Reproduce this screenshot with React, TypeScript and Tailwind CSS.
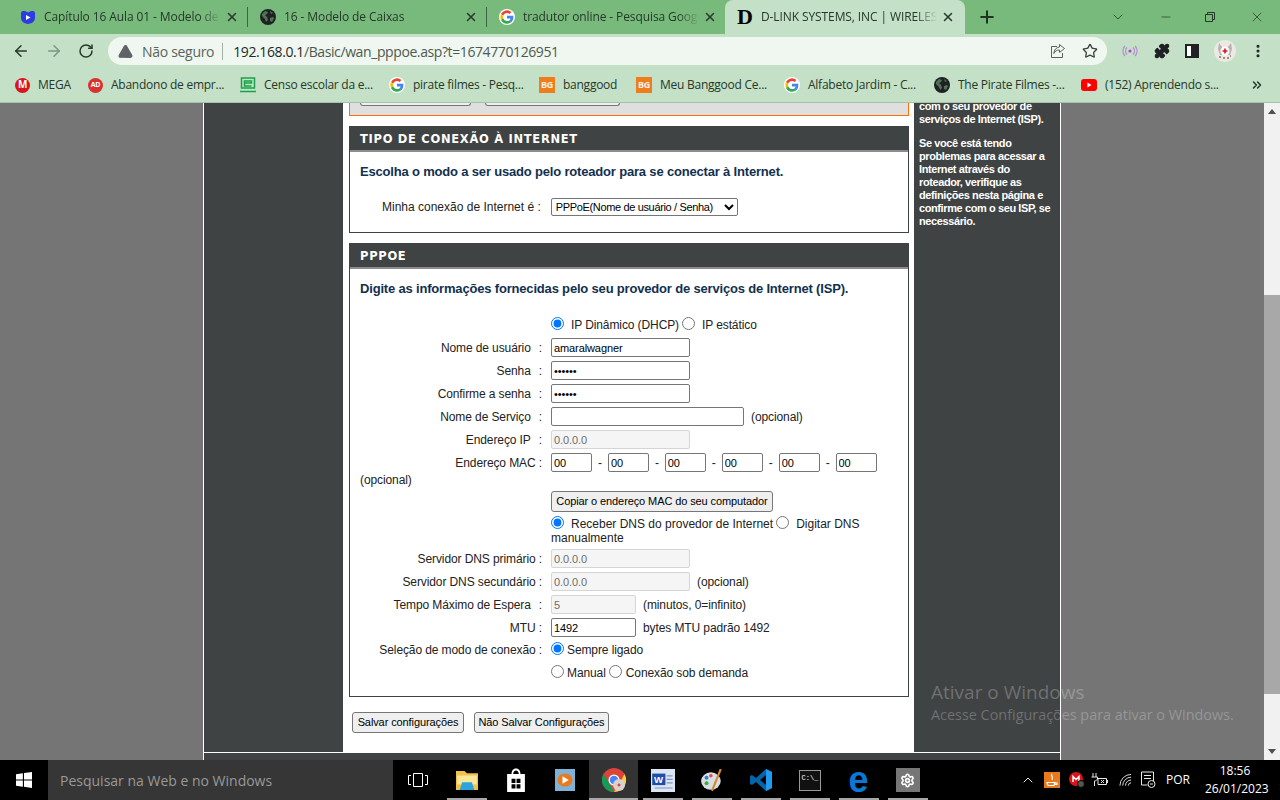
import React from 'react';
import { ArrowLeft, ArrowRight, RotateCw, TriangleAlert, Star, Puzzle, X, Plus, ChevronDown, Minus, ChevronUp, ChevronsRight, EllipsisVertical, Settings } from 'lucide-react';

function GoogleIcon() {
  return (
    <svg width="16" height="16" viewBox="0 0 48 48" className="shrink-0">
      <circle cx="24" cy="24" r="24" fill="#fff" />
      <path fill="#ea4335" d="M24 12c3 0 5.600 1 7.700 3l5.700-5.700A20 20 0 0 0 6 15l6.600 5.100C14.200 15.400 18.700 12 24 12z" />
      <path fill="#4285f4" d="M43 24.500c0-1.500-.1-2.900-.4-4.300H24v8h10.700c-.5 2.600-1.900 4.700-4 6.200l6.400 5c3.700-3.500 5.900-8.600 5.900-14.900z" />
      <path fill="#fbbc05" d="M12.600 27.900a12 12 0 0 1 0-7.800L6 15a20 20 0 0 0 0 18z" />
      <path fill="#34a853" d="M24 44c5.400 0 9.900-1.800 13.100-4.800l-6.400-5c-1.800 1.200-4 1.900-6.700 1.900-5.300 0-9.800-3.500-11.400-8.300L6 33a20 20 0 0 0 18 11z" />
    </svg>
  );
}

function GlobeIcon() {
  return (
    <svg width="16" height="16" viewBox="0 0 16 16" className="shrink-0">
      <circle cx="8" cy="8" r="8" fill="#202124" />
      <path fill="#78b97c" d="M2 5l3-3 3 1-1 2-2 1 2 2 1 3-2 2-1-3-3-3zM10 9l3-1 1 1-2 4-2-1zM10 2l3 2-2 1z" opacity="0.55" />
    </svg>
  );
}

function BgIcon() {
  return (
    <span className="flex h-4 w-4 shrink-0 items-center justify-center bg-[#ee7d1c] text-[9px] font-bold text-white/90">BG</span>
  );
}

function Tab({ icon, title, width, active }: { icon: React.ReactNode; title: string; width: string; active?: boolean }) {
  return (
    <div className={`flex h-[34px] items-center pl-3 ${width} ${active ? 'rounded-t-lg bg-[#c4e0c6] pr-[10px]' : 'pr-2'}`}>
      {icon}
      <span className="ml-2 min-w-0 flex-1 overflow-hidden whitespace-nowrap text-xs tracking-[-0.1px] text-[#26382a] [mask-image:linear-gradient(90deg,#000_88%,transparent)]">{title}</span>
      <X size={14} strokeWidth={2.6} className="ml-1 shrink-0 text-[#2b3a2f]" />
    </div>
  );
}

function Bookmark({ icon, label, width }: { icon: React.ReactNode; label: string; width: string }) {
  return (
    <div className={`flex shrink-0 items-center gap-2 whitespace-nowrap text-xs tracking-[-0.25px] text-[#26382a] ${width}`}>
      {icon}
      <span>{label}</span>
    </div>
  );
}

function ChromeBar() {
  return (
    <div className="shrink-0 font-['Open_Sans',sans-serif]">
      <div className="flex h-[34px] items-center bg-[#78b97c] pl-[8px]">
        <Tab
          width="w-[239px]"
          title="Capítulo 16 Aula 01 - Modelo de"
          icon={
            <svg width="16" height="16" viewBox="0 0 16 16" className="shrink-0">
              <path fill="#2b3de0" d="M1 4q0-2 2-2h2l3 1.500L11 2h2q2 0 2 2v5q0 5-7 6-7-1-7-6z" />
              <path fill="#fff" d="M6 6l4.500 2.500L6 11z" />
            </svg>
          }
        />
        <div className="h-5 w-px bg-[#3f6144]" />
        <Tab width="w-[238px]" title="16 - Modelo de Caixas" icon={<GlobeIcon />} />
        <div className="h-5 w-px bg-[#3f6144]" />
        <Tab width="w-[238px]" title="tradutor online - Pesquisa Google" icon={<GoogleIcon />} />
        <Tab
          active
          width="w-[240px]"
          title="D-LINK SYSTEMS, INC | WIRELESS"
          icon={<span className="w-4 shrink-0 font-['Liberation_Serif',serif] text-[22px] font-bold leading-none text-black">D</span>}
        />
        <Plus size={20} strokeWidth={2.4} className="ml-[12px] text-[#1f3324]" />
        <div className="ml-auto flex items-center text-[#26382a]">
          <ChevronDown size={16} strokeWidth={1.2} className="mr-[33px]" />
          <Minus size={14} strokeWidth={1.2} className="mr-[31px]" />
          <svg width="12" height="12" viewBox="0 0 12 12" fill="none" stroke="currentColor" className="mr-[33px]">
            <path d="M1.500 3.500h7v7h-7zM3.500 3.500v-2h7v7h-2" />
          </svg>
          <X size={16} strokeWidth={1.1} className="mr-[15px]" />
        </div>
      </div>

      <div className="flex h-[34px] items-center bg-[#c4e0c6] pl-[12px]">
        <ArrowLeft size={18} strokeWidth={2} className="text-[#26382a]" />
        <ArrowRight size={18} strokeWidth={2} className="ml-[15px] text-[#7f9482]" />
        <RotateCw size={16} strokeWidth={2.2} className="ml-[15px] text-[#26382a]" />
        <div className="ml-[14px] flex h-7 w-[999px] items-center rounded-full bg-[#f0f7f0] pl-[10px] pr-[8px] text-[14px]">
          <TriangleAlert size={15} strokeWidth={2.4} fill="#5f6368" className="text-[#5f6368]" />
          <span className="ml-[9px] tracking-[-0.3px] text-[#5a655c]">Não seguro</span>
          <span className="ml-[8px] mr-[10px] h-[17px] w-px bg-[#a5b0a7]" />
          <span className="tracking-[-0.4px] text-[#1c2a1f]">192.168.0.1</span>
          <span className="tracking-[-0.4px] text-[#4e5a50]">/Basic/wan_pppoe.asp?t=1674770126951</span>
          <svg width="16" height="16" viewBox="0 0 16 16" fill="none" stroke="#56625a" className="ml-auto mr-[16px]">
            <path d="M7 3.500H1.500v11h11V10" />
            <path d="M9.500 1.500l5 4-5 4V7C7 7 5 8 3.800 10.500 4 7 6 4.500 9.500 4z" />
          </svg>
          <Star size={16} strokeWidth={2} className="mr-[1px] text-[#3a463d]" />
        </div>
        <svg width="16" height="14" viewBox="0 0 16 14" fill="none" stroke="#b98ad6" strokeWidth="1.300" className="ml-[15px]">
          <circle cx="8" cy="7" r="1.600" fill="#a24bc9" stroke="none" />
          <path d="M5 3.500a5 5 0 0 0 0 7M11 3.500a5 5 0 0 1 0 7M2.800 2a8 8 0 0 0 0 10M13.200 2a8 8 0 0 1 0 10" />
        </svg>
        <Puzzle size={16} fill="#202124" className="ml-[16px] text-[#202124]" />
        <div className="ml-[15px] flex h-[14px] w-[14px] justify-end border-2 border-[#202124] bg-white">
          <div className="h-full w-[6px] bg-[#202124]" />
        </div>
        <svg width="22" height="22" viewBox="0 0 22 22" className="ml-[15px]">
          <circle cx="11" cy="11" r="11" fill="#ece8e4" />
          <path d="M5 3l3 4h6l3-4 1 6-2 6H6L4 9z" fill="#b9b2ad" />
          <circle cx="11" cy="11" r="4.500" fill="#fff" />
          <path d="M11 8.500v5M8.500 11h5" stroke="#d9161c" strokeWidth="1.600" />
          <path d="M5 17h2M9 18h2M13 18h2M16 16h1" stroke="#8a6f63" strokeWidth="1.300" />
        </svg>
        <EllipsisVertical size={16} strokeWidth={2.6} className="ml-[14px] text-[#202124]" />
      </div>

      <div className="flex h-[35px] items-center border-b border-[#a9c0ab] bg-[#c4e0c6] pl-[15px]">
        <Bookmark
          width="w-[73px]"
          label="MEGA"
          icon={<span className="flex h-[15px] w-[15px] items-center justify-center rounded-full bg-[#d9161c] text-[10px] font-bold text-white">M</span>}
        />
        <Bookmark
          width="w-[152px]"
          label="Abandono de empr..."
          icon={<span className="flex h-[15px] w-[15px] items-center justify-center rounded-full bg-[#d8322f] text-[7px] font-bold text-white">AD</span>}
        />
        <Bookmark
          width="w-[149px]"
          label="Censo escolar da e..."
          icon={
            <svg width="16" height="16" viewBox="0 0 16 16" fill="none" stroke="#16a34a" strokeWidth="1.500">
              <path d="M1.500 1h13v10h-13zM4.500 6h7V4h-7v5h7M0 14.500h16" />
            </svg>
          }
        />
        <Bookmark width="w-[150px]" label="pirate filmes - Pesq..." icon={<GoogleIcon />} />
        <Bookmark width="w-[97px]" label="banggood" icon={<BgIcon />} />
        <Bookmark width="w-[148px]" label="Meu Banggood Ce..." icon={<BgIcon />} />
        <Bookmark width="w-[150px]" label="Alfabeto Jardim - C..." icon={<GoogleIcon />} />
        <Bookmark width="w-[147px]" label="The Pirate Filmes -..." icon={<GlobeIcon />} />
        <Bookmark
          width="w-[169px]"
          label="(152) Aprendendo s..."
          icon={
            <svg width="16" height="12" viewBox="0 0 16 12">
              <rect width="16" height="12" rx="3" fill="#ff0000" />
              <path d="M6.400 3.400l4.200 2.600-4.200 2.600z" fill="#fff" />
            </svg>
          }
        />
        <ChevronsRight size={14} strokeWidth={2.6} className="text-[#26382a]" />
      </div>
    </div>
  );
}

function SectionBox({ title, children }: { title: string; children: React.ReactNode }) {
  return (
    <section className="border border-[#404343] bg-white">
      <h2 className="flex h-[25px] items-center border-b-2 border-[#8b8d8d] bg-[#404343] px-[10px] pt-[3px] font-['DejaVu_Sans',sans-serif] text-[11.500px] font-bold leading-none tracking-[0.7px] text-white">
        {title}
      </h2>
      {children}
    </section>
  );
}

function Radio({ checked }: { checked?: boolean }) {
  return (
    <input
      type="radio"
      readOnly
      checked={!!checked}
      className="m-0 mb-[3px] block h-[13px] w-[13px] shrink-0 accent-[#0075ff]"
    />
  );
}

function TextBox({ value, width, disabled, type }: { value?: string; width: string; disabled?: boolean; type?: string }) {
  return (
    <input
      readOnly
      type={type || 'text'}
      value={value || ''}
      disabled={disabled}
      className={`h-[19px] rounded-[2px] border px-[2px] text-[11px] ${width} ${disabled ? 'border-[#d5d5d5] bg-[#f5f5f5] text-[#6d6d6d]' : 'border-[#767676] bg-white text-black'}`}
    />
  );
}

// spaced: the router page pads some labels with &nbsp; before the colon
function FormRow({ label, spaced, children }: { label: string; spaced?: boolean; children: React.ReactNode }) {
  return (
    <div className="flex h-[23px] items-center">
      <div className="w-[182px] shrink-0 whitespace-pre text-right">
        {label}
        {spaced && <span className="ml-[8px]">:</span>}
      </div>
      <div className="ml-[9px] flex items-center whitespace-nowrap">{children}</div>
    </div>
  );
}

function MacFields() {
  const parts = [0, 1, 2, 3, 4, 5];
  return (
    <>
      {parts.map((p) => (
        <React.Fragment key={p}>
          {p > 0 && <span className="mx-[6px]">-</span>}
          <TextBox value="00" width="w-[41px]" />
        </React.Fragment>
      ))}
    </>
  );
}

function PageButton({ label, width }: { label: string; width: string }) {
  return (
    <button className={`block h-[21px] whitespace-nowrap rounded-[3px] border border-[#767676] bg-[#efefef] text-[11px] tracking-[-0.1px] text-black ${width}`}>
      {label}
    </button>
  );
}

function RouterPage() {
  return (
    <div className="flex min-h-0 flex-1 overflow-hidden bg-[#757575] font-['Liberation_Sans',sans-serif] text-[12px] tracking-[-0.1px] text-[#222]">
      <div className="ml-[203px] flex h-full w-[858px] flex-col border-x border-white bg-[#404343]">
        <div className="flex h-[649px] shrink-0">
          <div className="w-[139px] shrink-0 bg-[#404343]" />

          <main className="w-[571px] shrink-0 bg-white pl-[6px] pr-[5px]">
            <div className="h-[13px] overflow-hidden border border-t-0 border-[#ff6f00] bg-[#dfdfdf]">
              <div className="ml-[10px] flex h-[3px] items-end gap-[14px]">
                <div className="h-[3px] w-[111px] rounded-b-[3px] border border-t-0 border-[#767676] bg-[#efefef]" />
                <div className="h-[3px] w-[135px] rounded-b-[3px] border border-t-0 border-[#767676] bg-[#efefef]" />
              </div>
            </div>

            <div className="mt-[10px]">
              <SectionBox title="TIPO DE CONEXÃO À INTERNET">
                <p className="px-[10px] pt-[11px] text-[13px] font-bold leading-[17px] tracking-[-0.18px] text-[#12304f]">
                  Escolha o modo a ser usado pelo roteador para se conectar à Internet.
                </p>
                <div className="flex h-[52px] items-center pb-[1px] pl-[32px] pt-[3px] tracking-normal">
                  <span>Minha conexão de Internet é :</span>
                  <select className="ml-[10px] h-[18px] w-[187px] rounded-[2px] border border-[#767676] bg-white text-[11px] tracking-[-0.35px] text-black">
                    <option>PPPoE(Nome de usuário / Senha)</option>
                  </select>
                </div>
              </SectionBox>
            </div>

            <div className="mt-[10px]">
              <SectionBox title="PPPOE">
                <p className="px-[10px] pt-[11px] text-[13px] font-bold leading-[17px] tracking-[-0.18px] text-[#12304f]">
                  Digite as informações fornecidas pelo seu provedor de serviços de Internet (ISP).
                </p>
                <div className="px-[10px] pb-[11px] pt-[17px]">
                  <div className="ml-[191px] flex h-[22px] items-center whitespace-pre">
                    <Radio checked />
                    <span className="ml-[7px]">IP Dinâmico (DHCP)</span>
                    <span className="ml-[3px]"><Radio /></span>
                    <span className="ml-[7px]">IP estático</span>
                  </div>
                  <FormRow label="Nome de usuário" spaced><TextBox value="amaralwagner" width="w-[139px]" /></FormRow>
                  <FormRow label="Senha" spaced><TextBox type="password" value="aaaaaa" width="w-[139px]" /></FormRow>
                  <FormRow label="Confirme a senha" spaced><TextBox type="password" value="aaaaaa" width="w-[139px]" /></FormRow>
                  <FormRow label="Nome de Serviço" spaced>
                    <TextBox width="w-[193px]" />
                    <span className="ml-[7px]">(opcional)</span>
                  </FormRow>
                  <FormRow label="Endereço IP" spaced><TextBox disabled value="0.0.0.0" width="w-[139px]" /></FormRow>
                  <FormRow label="Endereço MAC :"><MacFields /></FormRow>
                  <div className="leading-[12px]">(opcional)</div>
                  <div className="ml-[191px] mt-[5px]">
                    <PageButton label="Copiar o endereço MAC do seu computador" width="w-[222px]" />
                  </div>
                  <div className="ml-[191px] mt-[5px] leading-[14px] tracking-normal">
                    <div className="flex h-[14px] items-center whitespace-pre">
                      <Radio checked />
                      <span className="ml-[7px]">Receber DNS do provedor de Internet</span>
                      <span className="ml-[3px]"><Radio /></span>
                      <span className="ml-[7px]">Digitar DNS</span>
                    </div>
                    <div>manualmente</div>
                  </div>
                  <div className="mt-[2px]">
                    <FormRow label="Servidor DNS primário :"><TextBox disabled value="0.0.0.0" width="w-[139px]" /></FormRow>
                    <FormRow label="Servidor DNS secundário :">
                      <TextBox disabled value="0.0.0.0" width="w-[139px]" />
                      <span className="ml-[7px]">(opcional)</span>
                    </FormRow>
                    <FormRow label="Tempo Máximo de Espera" spaced>
                      <TextBox disabled value="5" width="w-[85px]" />
                      <span className="ml-[7px]">(minutos, 0=infinito)</span>
                    </FormRow>
                    <FormRow label="MTU :">
                      <TextBox value="1492" width="w-[85px]" />
                      <span className="ml-[7px]">bytes MTU padrão 1492</span>
                    </FormRow>
                    <div className="-mt-px mb-px">
                      <FormRow label="Seleção de modo de conexão :">
                        <Radio checked />
                        <span className="ml-[3px]">Sempre ligado</span>
                      </FormRow>
                      <FormRow label="">
                        <Radio />
                        <span className="ml-[3px]">Manual</span>
                        <span className="ml-[3px]"><Radio /></span>
                        <span className="ml-[4px]">Conexão sob demanda</span>
                      </FormRow>
                    </div>
                  </div>
                </div>
              </SectionBox>
            </div>

            <div className="ml-[3px] mt-[15px] flex gap-[10px]">
              <PageButton label="Salvar configurações" width="w-[112px]" />
              <PageButton label="Não Salvar Configurações" width="w-[135px]" />
            </div>
          </main>

          <aside className="min-w-0 flex-1 overflow-hidden bg-[#404343] px-[5px] text-[11px] font-bold leading-[13px] tracking-[-0.4px] text-white">
            <p className="mt-[-3px]">com o seu provedor de<br />serviços de Internet (ISP).</p>
            <p className="mt-[11px]">
              Se você está tendo problemas para acessar a Internet através do roteador, verifique as definições nesta página e confirme com o seu ISP, se necessário.
            </p>
          </aside>
        </div>
        <div className="h-px shrink-0 bg-white" />
      </div>

      <div className="relative ml-auto h-full w-[16px] shrink-0 bg-[#f1f1f1]">
        <svg width="8" height="5" viewBox="0 0 8 5" className="mx-auto mt-[6px]"><path d="M4 0l4 5H0z" fill="#505050" /></svg>
        <div className="absolute left-0 right-0 top-[192px] h-[399px] bg-[#a8a8a8]" />
        <svg width="8" height="5" viewBox="0 0 8 5" className="absolute bottom-[6px] left-[4px]"><path d="M4 5l4-5H0z" fill="#505050" /></svg>
      </div>

      <div className="pointer-events-none absolute left-[931px] top-[680px] font-['Open_Sans',sans-serif] tracking-normal text-white/25">
        <div className="text-[19px] leading-[25px]">Ativar o Windows</div>
        <div className="text-[14.400px] leading-[20px]">Acesse Configurações para ativar o Windows.</div>
      </div>
    </div>
  );
}

function TaskSlot({ children, underline, active }: { children: React.ReactNode; underline?: boolean; active?: boolean }) {
  return (
    <div className={`relative flex h-10 w-[49px] items-center justify-center ${active ? 'bg-[#333]' : ''}`}>
      {children}
      {underline && <div className={`absolute bottom-0 h-[2px] bg-[#a8a8a8] ${active ? 'w-full' : 'w-[40px]'}`} />}
    </div>
  );
}

function Taskbar() {
  return (
    <div className="flex h-10 shrink-0 items-center bg-black font-['Open_Sans',sans-serif] text-white">
      <div className="flex h-10 w-[48px] items-center justify-center">
        <svg width="16" height="16" viewBox="0 0 14 14" fill="#fff">
          <path d="M0 2l6-1v5.500H0zM7 .800L14 0v6.500H7zM0 7.500h6V13l-6-1zM7 7.500h7V14l-7-1z" />
        </svg>
      </div>
      <div className="flex h-10 w-[345px] items-center bg-[#363636] pl-[12px] text-[14px] text-[#999]">Pesquisar na Web e no Windows</div>
      <div className="flex">
        <TaskSlot>
          <svg width="20" height="14" viewBox="0 0 20 14" fill="none" stroke="#fff">
            <path d="M5.500 .500h9v13h-9zM3 2.500H.500v9H3M17 2.500h2.500v9H17" />
          </svg>
        </TaskSlot>
        <TaskSlot underline>
          <svg width="22" height="20" viewBox="0 0 18 18" preserveAspectRatio="none">
            <path fill="#f0c24a" d="M0 1h7l2 2h9v15H0z" />
            <path fill="#fbe79a" d="M1 5h16v8H1z" />
            <path fill="#2aa5dd" d="M5 11h8l2 7H3z" />
          </svg>
        </TaskSlot>
        <TaskSlot>
          <svg width="20" height="24" viewBox="0 0 18 20" preserveAspectRatio="none">
            <path fill="#fff" d="M1 5h16v15H1zM5 5c0-6 8-6 8 0h-1.500c0-4-5-4-5 0z" />
            <path fill="#000" d="M5 9h3.500v3.500H5zM9.500 9H13v3.500H9.500zM5 13.500h3.500V17H5zM9.500 13.500H13V17H9.500z" />
          </svg>
        </TaskSlot>
        <TaskSlot>
          <svg width="20" height="22" viewBox="0 0 16 20" preserveAspectRatio="none">
            <rect width="16" height="20" fill="#7fb2d6" />
            <circle cx="8" cy="10" r="6" fill="#e87a1d" />
            <path fill="#fff" d="M6 6.500l5 3.500-5 3.500z" />
          </svg>
        </TaskSlot>
        <TaskSlot underline active>
          <svg width="24" height="24" viewBox="0 0 24 24">
            <circle cx="12" cy="12" r="12" fill="#db4437" />
            <path fill="#0f9d58" d="M12 24A12 12 0 0 1 1.600 6L7 15l5 9z" />
            <path fill="#ffcd40" d="M12 24l6-9 4.400-9A12 12 0 0 1 12 24z" />
            <circle cx="12" cy="12" r="5.500" fill="#fff" />
            <circle cx="12" cy="12" r="4.200" fill="#4285f4" />
            <circle cx="17" cy="17" r="6" fill="#d8d2ce" />
            <path d="M15.500 17h3M17 15.500v3" stroke="#d9161c" />
          </svg>
        </TaskSlot>
        <TaskSlot underline>
          <svg width="24" height="23" viewBox="0 0 20 20" preserveAspectRatio="none">
            <rect width="20" height="20" fill="#dbe5f4" />
            <rect x="1" y="4" width="11" height="10" fill="#1d4fa8" />
            <text x="2.500" y="12" fontSize="8" fontWeight="700" fill="#fff" fontFamily="Liberation Sans">W</text>
            <path stroke="#7d95bd" d="M13 6h5M13 9h5M13 12h5M3 16.500h15" />
          </svg>
        </TaskSlot>
        <TaskSlot underline>
          <svg width="22" height="24" viewBox="0 0 20 22">
            <ellipse cx="9" cy="12" rx="9" ry="8" fill="#d8dee6" />
            <circle cx="5" cy="9" r="1.800" fill="#2f7fd1" />
            <circle cx="9" cy="7" r="1.600" fill="#e44" />
            <circle cx="5" cy="14" r="1.800" fill="#4a3" />
            <path stroke="#d58a2c" strokeWidth="2" d="M18 1L10 21" />
          </svg>
        </TaskSlot>
        <TaskSlot underline>
          <svg width="24" height="24" viewBox="0 0 24 24">
            <path fill="#0065a9" d="M17 1l6 3v16l-6 3-10-9-4 3-2-1V8l2-1 4 3zM17 7l-6 5 6 5z" />
            <path fill="#1f9cf0" d="M17 1l6 3v16l-6 3z" />
          </svg>
        </TaskSlot>
        <TaskSlot underline>
          <div className="h-[21px] w-[22px] border border-[#999] bg-[#111] pl-[2px] pt-[4px] font-['Liberation_Mono',monospace] text-[7px] leading-none text-white">
            C:\_
          </div>
        </TaskSlot>
        <TaskSlot underline>
          <span className="font-['Liberation_Sans',sans-serif] text-[36px] font-bold leading-none text-[#0a78d7]">e</span>
        </TaskSlot>
        <TaskSlot underline>
          <div className="flex h-6 w-6 items-center justify-center bg-[#767676]">
            <Settings size={15} strokeWidth={2.6} className="text-white" />
          </div>
        </TaskSlot>
      </div>
      <div className="ml-auto flex items-center">
        <ChevronUp size={16} strokeWidth={1.4} />
        <svg width="16" height="16" viewBox="0 0 16 16" className="ml-[8px]">
          <rect width="16" height="16" fill="#e87a1d" />
          <path d="M3 10.500h8l-1 3H4zM8 2c-2 2 2 3 0 6M11 11h2v1.500h-2" fill="none" stroke="#fff" strokeWidth="1.200" />
        </svg>
        <svg width="16" height="16" viewBox="0 0 16 16" className="ml-[9px]">
          <circle cx="7" cy="7" r="7" fill="#d9161c" />
          <path d="M4 10V4.500l3 3 3-3V10" fill="none" stroke="#fff" strokeWidth="1.400" />
          <circle cx="12" cy="12" r="3.500" fill="#555" stroke="#000" />
        </svg>
        <svg width="17" height="14" viewBox="0 0 17 14" fill="none" stroke="#e8e8e8" className="ml-[6px]">
          <path d="M2 0v4M5 0v4M.500 4h6v2l-2 2-1 0v5" />
          <path d="M7 5.500h8.500v6H7zM16.500 7v3M10 7l3 3M13 7l-3 3" />
        </svg>
        <svg width="14" height="14" viewBox="0 0 15 14" fill="none" stroke="#e8e8e8" className="ml-[11px]">
          <path d="M1 13a12 12 0 0 1 12-12M4 13a9 9 0 0 1 9-9M7 13a6 6 0 0 1 6-6M10 13a3 3 0 0 1 3-3" />
        </svg>
        <svg width="16" height="18" viewBox="0 0 15 18" fill="none" stroke="#e8e8e8" className="ml-[7px]">
          <path d="M1 1h12v9M1 1v13h6M3.500 4.500h7M3.500 7.500h7" />
          <circle cx="11" cy="13" r="3.500" />
          <path d="M9.500 13h3" />
        </svg>
        <span className="ml-[10px] text-[12px]">POR</span>
        <div className="ml-[15px] w-[60px] text-center text-[12px] leading-[18px]">
          <div>18:56</div>
          <div>26/01/2023</div>
        </div>
        <div className="w-[15px]" />
      </div>
    </div>
  );
}

export default function App() {
  return (
    <div className="relative flex h-[800px] w-[1280px] flex-col overflow-hidden">
      <ChromeBar />
      <RouterPage />
      <Taskbar />
    </div>
  );
}
